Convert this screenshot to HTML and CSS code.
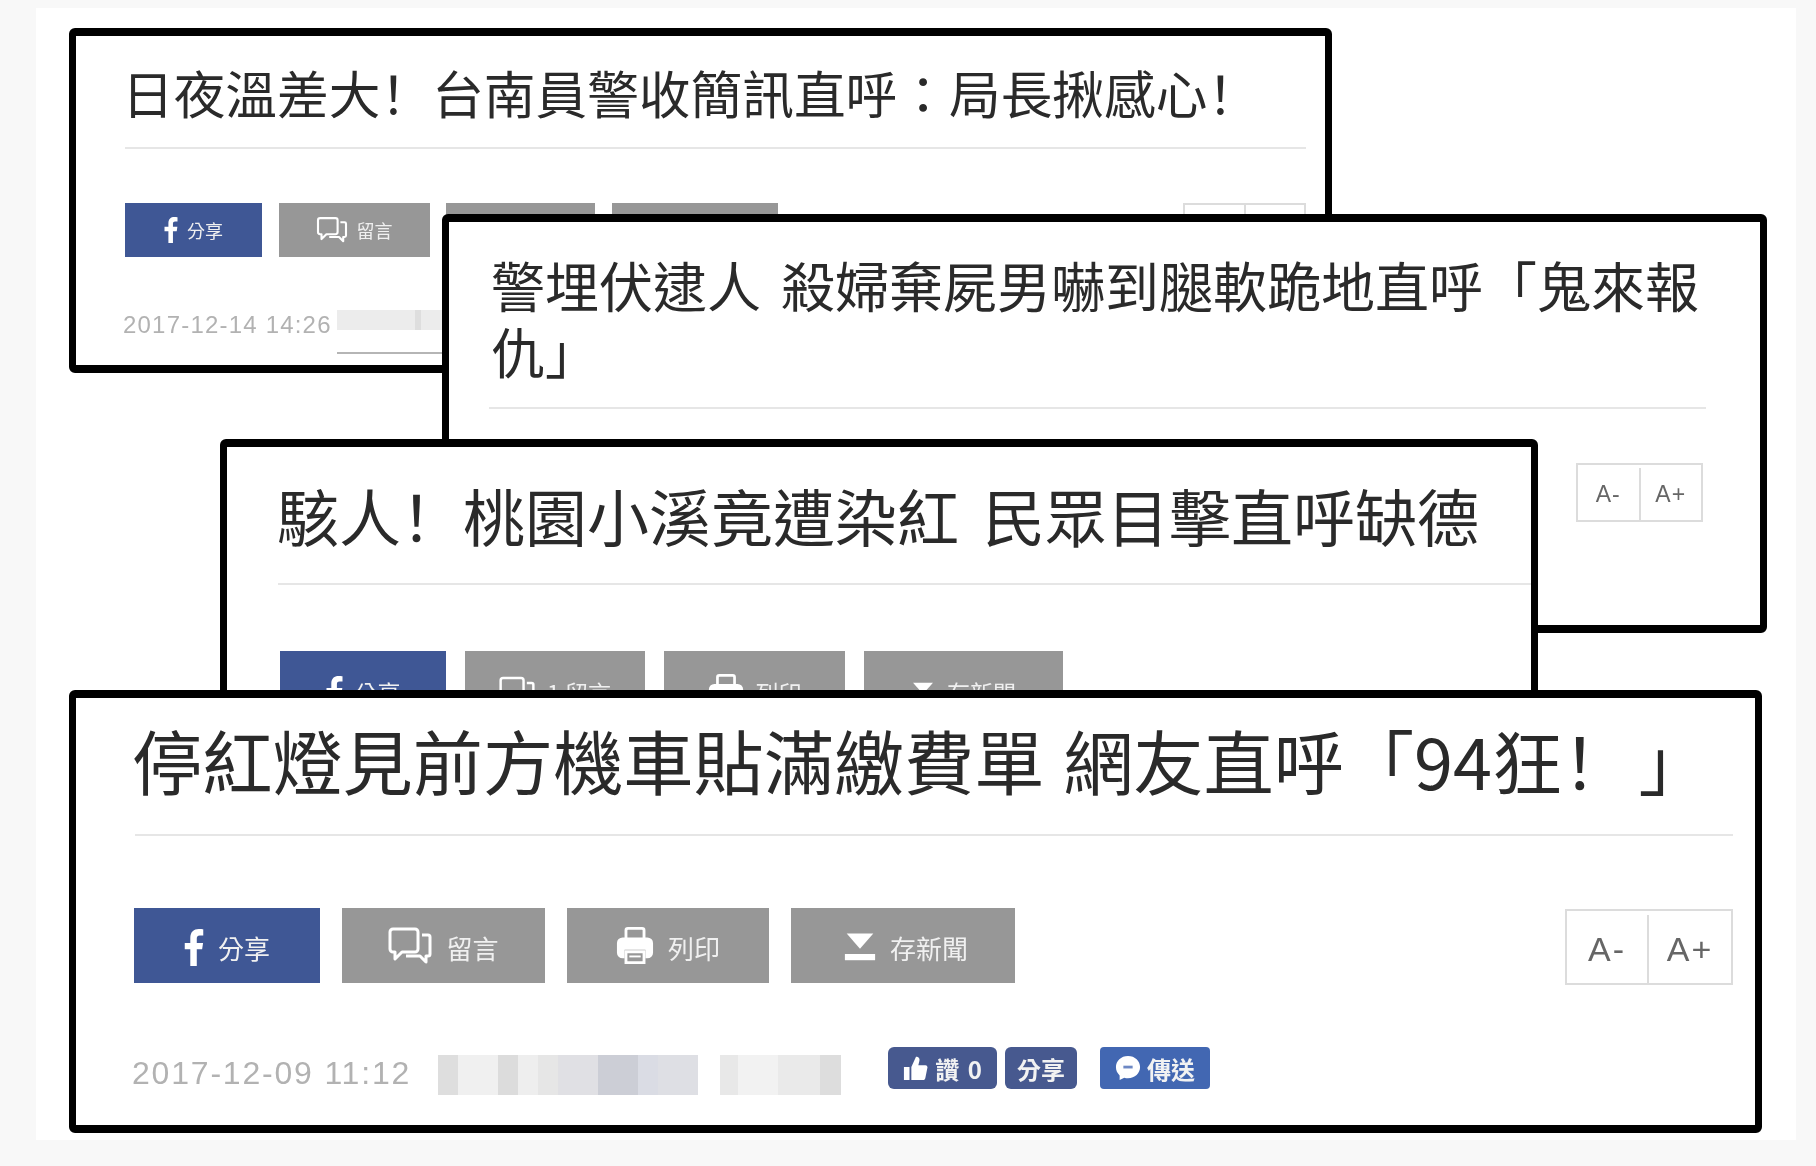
FILE: index.html
```html
<!DOCTYPE html>
<html lang="zh-Hant">
<head>
<meta charset="utf-8">
<title>直呼</title>
<link rel="stylesheet" href="styles.css">
</head>
<body>
<svg class="defs" width="0" height="0" aria-hidden="true">
  <symbol id="i-f" viewBox="0 0 20 40"><path d="M6 40V22H0v-7h6V9.500C6 3 10 0 15 0c2.500 0 4 .2 5 .4v6.600h-3.600C13.500 7 13 8.500 13 10.500V15h6.800l-1 7H13v18z" fill="#fff"/></symbol>
  <symbol id="i-c" viewBox="0 0 44 40"><path d="M5 3h22a3 3 0 0 1 3 3v17a3 3 0 0 1-3 3H14l-7 7v-7H5a3 3 0 0 1-3-3V6a3 3 0 0 1 3-3z" fill="none" stroke="#fff" stroke-width="3" stroke-linejoin="round"/><path d="M34 9h6a2 2 0 0 1 2 2v17a2 2 0 0 1-2 2h-2v6l-6-6H18" fill="none" stroke="#fff" stroke-width="3" stroke-linejoin="round"/></symbol>
  <symbol id="i-p" viewBox="0 0 40 40"><path d="M10.500 12V3.500a2 2 0 0 1 2-2h15a2 2 0 0 1 2 2V12" fill="none" stroke="#fff" stroke-width="3"/><path d="M7 11h26a6 6 0 0 1 6 6v10a6 6 0 0 1-6 6h-2v-9H9v9H7a6 6 0 0 1-6-6V17a6 6 0 0 1 6-6z" fill="#fff"/><path d="M10.500 26h19v11.500h-19z" fill="none" stroke="#fff" stroke-width="3"/><path d="M14 31h12" stroke="#fff" stroke-width="2"/></symbol>
  <symbol id="i-s" viewBox="0 0 36 36"><path d="M3 4h30L18 21z" fill="#fff"/><path d="M1 27h34v7H1z" fill="#fff"/></symbol>
  <symbol id="i-t" viewBox="0 0 28 28"><path d="M1 13h6v14H1zM9 13l5-11c3 0 4.500 2 3.500 5l-1 4h7.500c2 0 3 2 2 4l-2 10c-.5 2-2 2-3 2H9z" fill="#fff"/></symbol>
  <symbol id="i-m" viewBox="0 0 28 28"><path d="M14 1c7.500 0 13 5.300 13 12S21.500 25 14 25c-1.500 0-2.800-.2-4-.6L5 27v-5c-2.500-2.300-4-5.400-4-9C1 6.300 6.500 1 14 1z" fill="#fff"/><path d="M9 13h10" stroke="#6d88c4" stroke-width="3"/></symbol>
</svg>

<main class="canvas">

  <article class="card c1">
    <header class="head"><h1 class="title">日夜溫差大<span class="p" lang="zh-Hans">！</span>台南員警收簡訊直呼：局長揪感心<span class="p" lang="zh-Hans">！</span></h1></header>
    <div class="actions">
      <div class="btns">
        <a class="btn fb"><svg class="ico ico-f"><use href="#i-f"/></svg>分享</a>
        <a class="btn"><svg class="ico ico-c"><use href="#i-c"/></svg>留言</a>
        <a class="btn"><svg class="ico ico-p"><use href="#i-p"/></svg>列印</a>
        <a class="btn"><svg class="ico ico-s"><use href="#i-s"/></svg>存新聞</a>
      </div>
      <div class="sizer"><span>A-</span><span>A+</span></div>
    </div>
    <div class="meta">
      <time class="date">2017-12-14 14:26</time>
      <span class="mosaic"></span>
    </div>
  </article>

  <article class="card c2">
    <header class="head"><h1 class="title">警埋伏逮人 殺婦棄屍男嚇到腿軟跪地直呼「鬼來報仇」</h1></header>
    <div class="actions">
      <div class="sizer"><span>A-</span><span>A+</span></div>
    </div>
  </article>

  <article class="card c3">
    <header class="head"><h1 class="title">駭人<span class="p" lang="zh-Hans">！</span>桃園小溪竟遭染紅 民眾目擊直呼缺德</h1></header>
    <div class="actions">
      <div class="btns">
        <a class="btn fb"><svg class="ico ico-f"><use href="#i-f"/></svg>分享</a>
        <a class="btn"><svg class="ico ico-c"><use href="#i-c"/></svg>1 留言</a>
        <a class="btn"><svg class="ico ico-p"><use href="#i-p"/></svg>列印</a>
        <a class="btn"><svg class="ico ico-s"><use href="#i-s"/></svg>存新聞</a>
      </div>
    </div>
  </article>

  <article class="card c4">
    <header class="head"><h1 class="title">停紅燈見前方機車貼滿繳費單 網友直呼「94狂<span class="p" lang="zh-Hans">！</span>」</h1></header>
    <div class="actions">
      <div class="btns">
        <a class="btn fb"><svg class="ico ico-f"><use href="#i-f"/></svg>分享</a>
        <a class="btn"><svg class="ico ico-c"><use href="#i-c"/></svg>留言</a>
        <a class="btn"><svg class="ico ico-p"><use href="#i-p"/></svg>列印</a>
        <a class="btn btn-save"><svg class="ico ico-s"><use href="#i-s"/></svg>存新聞</a>
      </div>
      <div class="sizer"><span>A-</span><span>A+</span></div>
    </div>
    <div class="meta">
      <time class="date">2017-12-09 11:12</time>
      <span class="mosaic"></span>
      <div class="social">
        <a class="pill like"><svg class="pico"><use href="#i-t"/></svg>讚 0</a>
        <a class="pill share">分享</a>
        <a class="pill send"><svg class="pico"><use href="#i-m"/></svg>傳送</a>
      </div>
    </div>
  </article>

</main>
</body>
</html>
```

FILE: styles.css
```css
* { box-sizing: border-box; }

html, body {
  margin: 0;
  height: 100%;
}

body {
  background: #f8f8f8;
  font-family: "Noto Sans CJK TC", "Liberation Sans", sans-serif;
  overflow: hidden;
}

.defs { position: absolute; }

.canvas {
  position: absolute;
  left: 36px;
  top: 8px;
  width: 1760px;
  height: 1132px;
  background: #fff;
  filter: blur(0.7px);
}

/* Overlapping clippings: their place on the canvas is the content */
.card {
  position: absolute;
  overflow: hidden;
  background: #fff;
  border: solid #000;
  border-width: 8px 7px;
  border-radius: 6px;
}

.c1 { left: 33px;  top: 20px;  width: 1263px; height: 345px; padding: 0 19px 0 49px; }
.c2 { left: 406px; top: 206px; width: 1325px; height: 419px; padding: 0 54px 0 40px; }
.c3 { left: 184px; top: 431px; width: 1318px; height: 270px; padding: 0 0 0 51px; }
.c4 { left: 33px;  top: 682px; width: 1693px; height: 443px; padding: 0 22px 0 59px; }

.head { border-bottom: 2px solid #e6e6e6; }

.title {
  margin: 0;
  font-weight: 400;
  color: #2a2a2a;
}

/* Fullwidth exclamation mark sits left in its box, as in the source font */
.p { font-family: "Noto Sans CJK SC", sans-serif; }

.c1 .head { padding: 26px 0 25px; }
.c1 .title { font-size: 51.700px; line-height: 60px; margin-left: -3px; }

.c2 .head { padding: 30px 0 23px 2px; }
.c2 .title { font-size: 54px; line-height: 66px; word-spacing: 8px; }

.c3 .head { padding: 33px 0 33px; }
.c3 .title { font-size: 62px; line-height: 70px; margin-left: -1px; word-spacing: 10px; }

.c4 .head { padding: 22px 0 34px; }
.c4 .title { font-size: 70.200px; line-height: 80px; margin-left: -3px; word-spacing: 3px; }
.c4 .p { margin-right: 6px; }

.actions {
  display: flex;
  justify-content: space-between;
  align-items: flex-start;
}

.c1 .actions { margin-top: 54px; }
.c2 .actions { margin-top: 54px; justify-content: flex-end; padding-right: 3px; }
.c3 .actions { margin-top: 66px; }
.c4 .actions { margin-top: 72px; }

.btns { display: grid; }
.c1 .btns { grid-template-columns: 137px 151px 149px 166px; column-gap: 16.500px; grid-auto-rows: 54px; }
.c3 .btns { grid-template-columns: 166px 180px 181px 199px; column-gap: 19px; grid-auto-rows: 74px; margin-left: 2px; }
.c4 .btns { grid-template-columns: 186px 203px 202px 224px; column-gap: 22px; grid-auto-rows: 75px; margin-left: -1px; }

.btn {
  display: flex;
  align-items: center;
  justify-content: center;
  background: #979797;
  color: #f0f0f0;
  white-space: nowrap;
}
.btn.fb { background: #3f5795; }

.c1 .btn { font-size: 18px; gap: 9px; }
.c3 .btn { font-size: 23px; gap: 12px; padding-top: 8px; }
.c4 .btn { font-size: 26px; gap: 14px; padding-top: 4px; }
.c4 .btn-save { padding-left: 6px; }

.ico { flex: none; display: block; }
.c1 .ico-f { width: 14px; height: 26px; }
.c1 .ico-c { width: 32px; height: 28px; }
.c1 .ico-p { width: 28px; height: 28px; }
.c1 .ico-s { width: 24px; height: 24px; }
.c3 .ico-f { width: 17px; height: 32px; }
.c3 .ico-c { width: 36px; height: 34px; }
.c3 .ico-p { width: 36px; height: 36px; }
.c3 .ico-s { width: 24px; height: 24px; }
.c4 .ico-f { width: 20px; height: 37px; }
.c4 .ico-c { width: 44px; height: 40px; margin-top: -4px; }
.c4 .ico-p { width: 38px; height: 38px; margin-top: -4px; }
.c4 .ico-s { width: 32px; height: 32px; margin-top: -4px; }

.sizer {
  display: flex;
  border: 2px solid #dcdcdc;
  color: #666;
  font-family: "Liberation Sans", sans-serif;
}
.sizer span {
  display: flex;
  align-items: center;
  justify-content: center;
  flex: 1;
}
.sizer span + span { border-left: 2px solid #dcdcdc; }

.c1 .sizer { width: 123px; height: 54px; font-size: 22px; }
.c2 .sizer { width: 127px; height: 59px; font-size: 23px; letter-spacing: 1px; padding-top: 3px; }
.c4 .sizer { width: 168px; height: 76px; margin-top: 1px; font-size: 34px; letter-spacing: 2px; padding-top: 4px; }
.c4 .sizer span:first-child { flex: 0 0 80px; }

.meta {
  display: flex;
  align-items: center;
}

.date {
  font-family: "Liberation Sans", sans-serif;
  color: #b2b2b2;
  white-space: nowrap;
}

.c1 .meta { margin-top: 48px; height: 40px; margin-left: -2px; }
.c1 .date { font-size: 24px; letter-spacing: 1.200px; width: 214px; }
.c1 .mosaic {
  display: block;
  align-self: flex-start;
  width: 110px;
  height: 44px;
  margin-top: 5px;
  border-bottom: 2px solid #b5b5b5;
  background: linear-gradient(90deg, #ececec 0 78px, #dedede 78px 84px, #ececec 84px) no-repeat top / 100% 20px;
}

.c4 .meta { margin-top: 67px; margin-left: -3px; height: 42px; }
.c4 .date { font-size: 32px; letter-spacing: 1.800px; width: 306px; }
.c4 .mosaic {
  display: block;
  width: 403px;
  height: 40px;
  margin-top: 4px;
  background: linear-gradient(90deg,
    #dedede 0 20px, #f0f0f0 20px 60px, #dcdcdc 60px 80px, #eeeeee 80px 100px,
    #e6e6e6 100px 120px, #e0e0e4 120px 160px, #cccED6 160px 200px, #dadce4 200px 220px,
    #dedfe4 220px 260px, #ffffff 260px 282px, #e8e8e8 282px 300px, #f2f2f2 300px 340px,
    #eaeaea 340px 382px, #dddddd 382px 403px);
}

.social {
  display: flex;
  margin-left: 47px;
  margin-bottom: 10px;
  font-weight: 700;
  font-size: 24px;
}

.pill {
  display: flex;
  align-items: center;
  justify-content: center;
  gap: 6px;
  height: 42px;
  border-radius: 6px;
  color: #f2f2f2;
  white-space: nowrap;
}
.like  { width: 109px; background: #47598f; word-spacing: 3px; }
.share { width: 72px;  background: #47598f; margin-left: 8px; }
.send  { width: 110px; background: #4267b2; margin-left: 23px; border-radius: 4px; }

.pico { width: 26px; height: 26px; flex: none; }
```
